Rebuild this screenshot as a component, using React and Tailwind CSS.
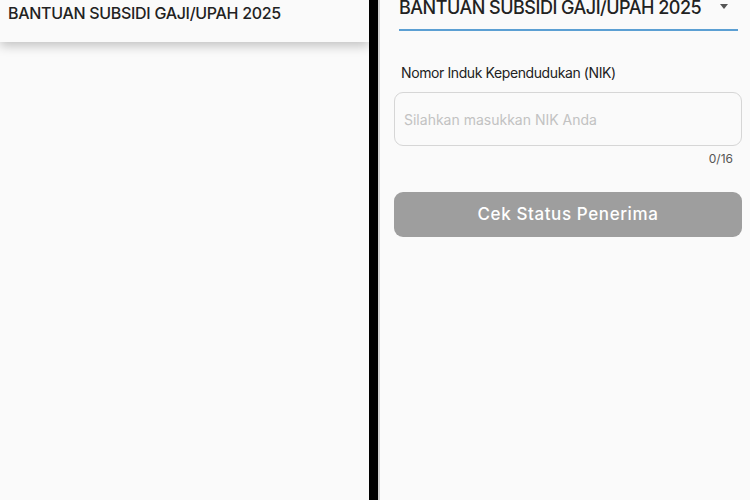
const font = { fontFamily: "Inter, 'Noto Sans', sans-serif" };

const App = () => {
  return (
    <div className="w-[750px] h-[500px] flex bg-[#fafafa] overflow-hidden" style={font}>
      {/* left screen */}
      <div className="w-[369px] h-full flex flex-col">
        <div className="h-[42px] bg-[#fafafa] shadow-[0_4px_10px_rgba(0,0,0,0.22)] flex items-start px-2">
          <span className="text-[16px] leading-none mt-[5px] text-[#222] tracking-[-0.3px] font-medium">
            BANTUAN SUBSIDI GAJI/UPAH 2025
          </span>
        </div>
      </div>

      {/* divider */}
      <div className="w-[9px] h-full bg-black" />
      <div className="w-[2px] h-full bg-[#cfcfcf]" />

      {/* right screen */}
      <div className="flex-1 flex flex-col pl-[14px] pr-[8px]">
        <div className="ml-[5px] mr-[4px] h-[31px] flex items-start justify-between border-b-2 border-[#5b9fd3]">
          <span className="text-[18px] leading-[15px] text-[#222] tracking-[-0.5px] font-medium">
            BANTUAN SUBSIDI GAJI/UPAH 2025
          </span>
          <span className="w-0 h-0 mt-[4px] mr-[10px] border-l-[4px] border-r-[4px] border-t-[5px] border-l-transparent border-r-transparent border-t-[#555]" />
        </div>

        <label className="ml-[7px] mt-[35px] text-[14px] leading-none text-[#222] tracking-[-0.4px]">
          Nomor Induk Kependudukan (NIK)
        </label>
        <div className="mt-[12px] h-[54px] rounded-[9px] border border-[#d6d6d6] bg-[#fafafa] flex items-center px-[9px]">
          <span className="text-[14px] text-[#c2c2c2]">Silahkan masukkan NIK Anda</span>
        </div>
        <div className="mt-[7px] text-right pr-[9px] text-[12px] leading-none text-[#555]">0/16</div>

        <button className="mt-[27px] h-[45px] rounded-[9px] bg-[#9e9e9e] text-white text-[17px] font-medium tracking-[0.6px]">
          Cek Status Penerima
        </button>
      </div>
    </div>
  );
};

export default App;
